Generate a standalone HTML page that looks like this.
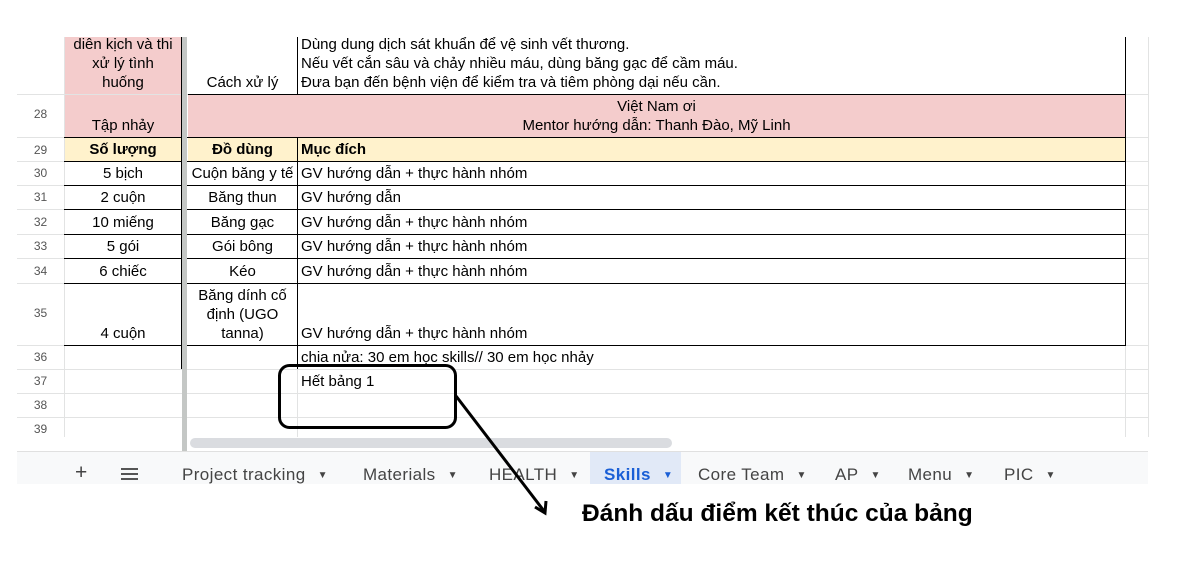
<!DOCTYPE html>
<html><head><meta charset="utf-8"><style>
*{margin:0;padding:0;box-sizing:border-box}
body{width:1182px;height:572px;background:#fff;position:relative;overflow:hidden;font-family:"Liberation Sans",Arial,sans-serif;color:#000}
.a{position:absolute}
.hl{position:absolute;left:17px;width:1131px;height:1px;background:#e2e3e3}
.vl{position:absolute;width:1px;background:#e2e3e3}
.rn{position:absolute;left:17px;width:47px;font-size:12px;color:#555;text-align:center}
.c{position:absolute;font-size:15px;line-height:19px;display:flex;flex-direction:column;justify-content:flex-end;padding-bottom:2px;text-align:center;align-items:center}
.l{align-items:flex-start;text-align:left;padding-left:4px}
.b{font-weight:bold}
.tab{position:absolute;top:465px;font-size:17px;color:#444;letter-spacing:.4px;white-space:nowrap}
.tab i{font-style:normal;font-size:10px;margin-left:12px;position:relative;top:-2px}
</style></head><body>
<!-- light gridlines -->
<div class="hl" style="top:94px"></div><div class="hl" style="top:137px"></div><div class="hl" style="top:161px"></div><div class="hl" style="top:185px"></div><div class="hl" style="top:209px"></div><div class="hl" style="top:234px"></div><div class="hl" style="top:258px"></div><div class="hl" style="top:283px"></div><div class="hl" style="top:345px"></div><div class="hl" style="top:369px"></div><div class="hl" style="top:393px"></div><div class="hl" style="top:417px"></div><div class="hl" style="top:437px"></div>
<div class="vl" style="left:64px;top:37px;height:400px"></div>
<div class="vl" style="left:297px;top:369px;height:68px"></div>
<div class="vl" style="left:1125px;top:345px;height:92px"></div>
<div class="vl" style="left:1148px;top:37px;height:400px"></div>
<!-- fills -->
<div class="a" style="left:65px;top:37px;width:117px;height:57px;background:#f4cccc"></div>
<div class="a" style="left:65px;top:95px;width:117px;height:42px;background:#f4cccc"></div>
<div class="a" style="left:188px;top:94px;width:937px;height:43px;background:#f4cccc"></div>
<div class="a" style="left:65px;top:137px;width:118px;height:24px;background:#fff2cc"></div>
<div class="a" style="left:188px;top:137px;width:937px;height:24px;background:#fff2cc"></div>
<!-- black borders -->
<div class="a" style="left:188px;top:94px;width:938px;height:1px;background:#000"></div>
<div class="a" style="left:64px;top:137px;width:1062px;height:1px;background:#000"></div>
<div class="a" style="left:64px;top:161px;width:1062px;height:1px;background:#000"></div>
<div class="a" style="left:64px;top:185px;width:1062px;height:1px;background:#000"></div>
<div class="a" style="left:64px;top:209px;width:1062px;height:1px;background:#000"></div>
<div class="a" style="left:64px;top:234px;width:1062px;height:1px;background:#000"></div>
<div class="a" style="left:64px;top:258px;width:1062px;height:1px;background:#000"></div>
<div class="a" style="left:64px;top:283px;width:1062px;height:1px;background:#000"></div>
<div class="a" style="left:64px;top:345px;width:1062px;height:1px;background:#000"></div>
<div class="a" style="left:297px;top:37px;width:1px;height:57px;background:#000"></div>
<div class="a" style="left:297px;top:137px;width:1px;height:232px;background:#000"></div>
<div class="a" style="left:1125px;top:37px;width:1px;height:308px;background:#000"></div>
<div class="a" style="left:181px;top:37px;width:1px;height:332px;background:#000"></div>
<!-- frozen divider -->
<div class="a" style="left:182px;top:37px;width:5px;height:413px;background:#c4c7c5"></div>
<!-- row numbers -->
<div class="rn" style="top:107px">28</div><div class="rn" style="top:143px">29</div><div class="rn" style="top:166px">30</div><div class="rn" style="top:190px">31</div><div class="rn" style="top:215px">32</div><div class="rn" style="top:239px">33</div><div class="rn" style="top:264px">34</div><div class="rn" style="top:306px">35</div><div class="rn" style="top:350px">36</div><div class="rn" style="top:374px">37</div><div class="rn" style="top:398px">38</div><div class="rn" style="top:422px">39</div>
<!-- row 27 -->
<div class="c" style="left:64px;top:30px;width:118px;height:64px">diên kịch và thi<br>xử lý tình<br>huống</div>
<div class="c" style="left:188px;top:37px;width:109px;height:57px">Cách xử lý</div>
<div class="c l" style="left:297px;top:30px;width:828px;height:64px">Dùng dung dịch sát khuẩn để vệ sinh vết thương.<br>Nếu vết cắn sâu và chảy nhiều máu, dùng băng gạc để cầm máu.<br>Đưa bạn đến bệnh viện để kiểm tra và tiêm phòng dại nếu cần.</div>
<!-- row 28 -->
<div class="c" style="left:64px;top:94px;width:118px;height:43px">Tập nhảy</div>
<div class="c" style="left:188px;top:94px;width:937px;height:43px">Việt Nam ơi<br>Mentor hướng dẫn: Thanh Đào, Mỹ Linh</div>
<!-- row 29 -->
<div class="c b" style="left:64px;top:137px;width:118px;height:24px">Số lượng</div>
<div class="c b" style="left:188px;top:137px;width:109px;height:24px">Đồ dùng</div>
<div class="c l b" style="left:297px;top:137px;width:828px;height:24px">Mục đích</div>
<!-- rows 30-34 -->
<div class="c" style="left:64px;top:161px;width:118px;height:24px">5 bịch</div><div class="c" style="left:188px;top:161px;width:109px;height:24px;white-space:nowrap">Cuộn băng y tế</div><div class="c l" style="left:297px;top:161px;width:828px;height:24px">GV hướng dẫn + thực hành nhóm</div>
<div class="c" style="left:64px;top:185px;width:118px;height:24px">2 cuộn</div><div class="c" style="left:188px;top:185px;width:109px;height:24px">Băng thun</div><div class="c l" style="left:297px;top:185px;width:828px;height:24px">GV hướng dẫn</div>
<div class="c" style="left:64px;top:209px;width:118px;height:25px">10 miếng</div><div class="c" style="left:188px;top:209px;width:109px;height:25px">Băng gạc</div><div class="c l" style="left:297px;top:209px;width:828px;height:25px">GV hướng dẫn + thực hành nhóm</div>
<div class="c" style="left:64px;top:234px;width:118px;height:24px">5 gói</div><div class="c" style="left:188px;top:234px;width:109px;height:24px">Gói bông</div><div class="c l" style="left:297px;top:234px;width:828px;height:24px">GV hướng dẫn + thực hành nhóm</div>
<div class="c" style="left:64px;top:258px;width:118px;height:25px">6 chiếc</div><div class="c" style="left:188px;top:258px;width:109px;height:25px">Kéo</div><div class="c l" style="left:297px;top:258px;width:828px;height:25px">GV hướng dẫn + thực hành nhóm</div>
<!-- row 35 -->
<div class="c" style="left:64px;top:283px;width:118px;height:62px">4 cuộn</div><div class="c" style="left:188px;top:283px;width:109px;height:62px">Băng dính cố<br>định (UGO<br>tanna)</div><div class="c l" style="left:297px;top:283px;width:828px;height:62px">GV hướng dẫn + thực hành nhóm</div>
<div class="c l" style="left:297px;top:345px;width:828px;height:24px">chia nửa: 30 em học skills// 30 em học nhảy</div>
<div class="c l" style="left:297px;top:369px;width:828px;height:24px">Hết bảng 1</div>
<!-- scrollbar -->
<div class="a" style="left:17px;top:437px;width:1131px;height:15px;background:#fff"></div>
<div class="a" style="left:182px;top:437px;width:5px;height:15px;background:#c4c7c5"></div>
<div class="a" style="left:190px;top:438px;width:482px;height:10px;border-radius:5px;background:#dadce0"></div>
<div class="a" style="left:17px;top:451px;width:1131px;height:1px;background:#e0e0e0"></div>
<!-- tab bar -->
<div class="a" style="left:17px;top:452px;width:1131px;height:32px;background:#f8f9fa"></div>
<div class="a" style="left:590px;top:452px;width:91px;height:32px;background:#e1e9f7"></div>
<div class="tab" style="left:75px;font-size:21px;top:461px">+</div>
<div class="a" style="left:121px;top:468px;width:17px;height:2px;background:#555;box-shadow:0 5px 0 #555,0 10px 0 #555"></div>
<div class="tab" style="left:182px">Project tracking<i>▼</i></div>
<div class="tab" style="left:363px">Materials<i>▼</i></div>
<div class="tab" style="left:489px">HEALTH<i>▼</i></div>
<div class="tab" style="left:604px;color:#1a5fd6;font-weight:bold">Skills<i>▼</i></div>
<div class="tab" style="left:698px">Core Team<i>▼</i></div>
<div class="tab" style="left:835px">AP<i>▼</i></div>
<div class="tab" style="left:908px">Menu<i>▼</i></div>
<div class="tab" style="left:1004px">PIC<i>▼</i></div>
<!-- annotation -->
<svg class="a" style="left:0;top:0" width="1182" height="572">
<rect x="279.5" y="365.5" width="176" height="62" rx="10" fill="none" stroke="#000" stroke-width="3"/>
<line x1="456" y1="396" x2="544" y2="511" stroke="#000" stroke-width="3"/>
<path d="M535 507 L545 513 L546 501" fill="none" stroke="#000" stroke-width="3"/>
</svg>
<div class="a" style="left:582px;top:500px;font-size:24.5px;font-weight:bold;white-space:nowrap">Đánh dấu điểm kết thúc của bảng</div>
</body></html>
